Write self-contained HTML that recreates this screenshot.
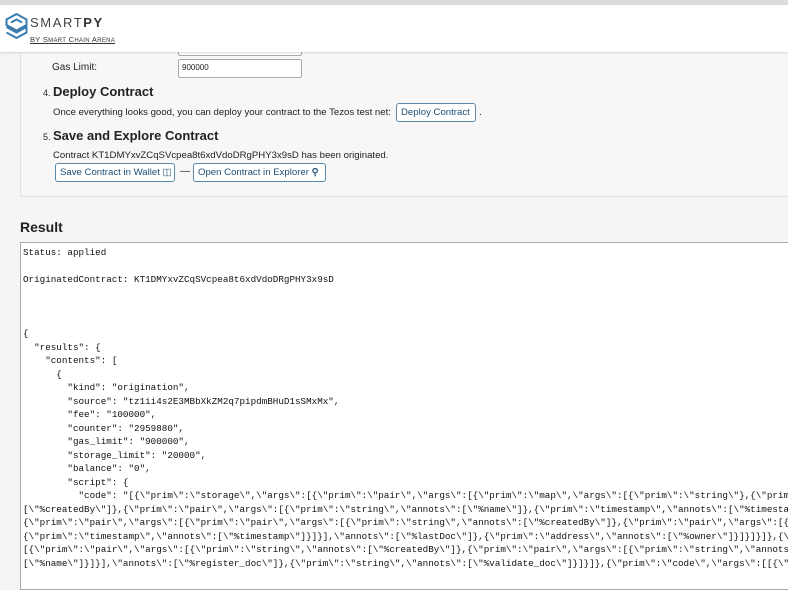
<!DOCTYPE html>
<html><head><meta charset="utf-8"><style>
body{margin:0;width:788px;height:573px;overflow:hidden;background:#f5f5f5;font-family:"Liberation Sans",sans-serif;color:#222;position:relative}
.top{position:absolute;left:0;top:0;width:788px;height:5px;background:#dcdcdc}
.hdr{position:absolute;left:0;top:5px;width:788px;height:47px;background:#fff;box-shadow:0 1px 2px rgba(0,0,0,.15);z-index:2}
.card{position:absolute;left:20px;top:40px;width:780px;height:155px;background:#f7f7f7;border:1px solid #e2e2e2}
.a{position:absolute;white-space:nowrap}
.inp{position:absolute;background:#fff;border:1px solid #aaa;border-radius:2px;font-size:8px;padding-left:3px;box-sizing:border-box;line-height:16px}
.btn{position:absolute;white-space:nowrap;border:1px solid #5a88a8;border-radius:3px;background:#fff;color:#1d4f76;font-size:10px;line-height:17px;padding:0 4px;box-sizing:border-box}
h3{margin:0;font-size:13px;font-weight:bold}
pre{position:absolute;left:20px;top:242px;width:800px;height:340px;margin:0;background:#fff;border:1px solid #aaa;font-family:"Liberation Mono",monospace;font-size:9.25px;line-height:13.5px;padding:3px 2px;overflow:hidden;color:#111}
</style></head><body>
<div class="top"></div>
<div class="hdr">
<svg style="position:absolute;left:5px;top:8px" width="23" height="26" viewBox="0 0 23 26" fill="none" stroke="#3a7cb0" stroke-width="2"><path d="M11.5 1L21.5 6.5V12L11.5 17.5L1.5 12V6.5Z"/><path d="M6 9.5L11.5 6.5L17 9.5"/><path d="M1.5 14L11.5 19.5L21.5 14V19.5L11.5 25L1.5 19.5"/></svg>
<div class="a" style="left:30px;top:10px;font-size:13px;letter-spacing:1.6px;color:#444">SMART<b style="color:#333">PY</b></div>
<div class="a" style="left:30px;top:30px;font-size:7.5px;letter-spacing:.3px;color:#333;text-decoration:underline">BY S<span style="font-size:6px">MART</span> C<span style="font-size:6px">HAIN</span> A<span style="font-size:6px">RENA</span></div>
</div>
<div class="card"></div>
<div class="inp" style="left:178px;top:46px;width:124px;height:10px"></div>
<div class="a" style="left:52px;top:62px;font-size:10px">Gas Limit:</div>
<div class="inp" style="left:178px;top:59px;width:124px;height:19px">900000</div>
<div class="a" style="left:43px;top:88px;font-size:9px">4.</div><h3 class="a" style="left:53px;top:84px">Deploy Contract</h3>
<div class="a" style="left:53px;top:107px;font-size:9.6px">Once everything looks good, you can deploy your contract to the Tezos test net:</div>
<div class="btn" style="left:396px;top:103px;height:19px;width:80px;font-size:9.6px">Deploy Contract</div>
<div class="a" style="left:479px;top:107px;font-size:10px">.</div>
<div class="a" style="left:43px;top:132px;font-size:9px">5.</div><h3 class="a" style="left:53px;top:128px">Save and Explore Contract</h3>
<div class="a" style="left:53px;top:150px;font-size:9.6px">Contract KT1DMYxvZCqSVcpea8t6xdVdoDRgPHY3x9sD has been originated.</div>
<div class="btn" style="left:55px;top:163px;height:19px;width:120px;font-size:9.6px">Save Contract in Wallet &#9707;</div>
<div class="a" style="left:180px;top:166px;font-size:10px">—</div>
<div class="btn" style="left:193px;top:163px;height:19px;width:133px;font-size:9.6px">Open Contract in Explorer <b>&#9906;</b></div>
<div class="a" style="left:20px;top:219px;font-size:14px;font-weight:bold;color:#222">Result</div>
<pre>Status: applied

OriginatedContract: KT1DMYxvZCqSVcpea8t6xdVdoDRgPHY3x9sD



{
  "results": {
    "contents": [
      {
        "kind": "origination",
        "source": "tz1ii4s2E3MBbXkZM2q7pipdmBHuD1sSMxMx",
        "fee": "100000",
        "counter": "2959880",
        "gas_limit": "900000",
        "storage_limit": "20000",
        "balance": "0",
        "script": {
          "code": "[{\"prim\":\"storage\",\"args\":[{\"prim\":\"pair\",\"args\":[{\"prim\":\"map\",\"args\":[{\"prim\":\"string\"},{\"prim
[\"%createdBy\"]},{\"prim\":\"pair\",\"args\":[{\"prim\":\"string\",\"annots\":[\"%name\"]},{\"prim\":\"timestamp\",\"annots\":[\"%timesta
{\"prim\":\"pair\",\"args\":[{\"prim\":\"pair\",\"args\":[{\"prim\":\"string\",\"annots\":[\"%createdBy\"]},{\"prim\":\"pair\",\"args\":[{
{\"prim\":\"timestamp\",\"annots\":[\"%timestamp\"]}]}],\"annots\":[\"%lastDoc\"]},{\"prim\":\"address\",\"annots\":[\"%owner\"]}]}]}]},{\
[{\"prim\":\"pair\",\"args\":[{\"prim\":\"string\",\"annots\":[\"%createdBy\"]},{\"prim\":\"pair\",\"args\":[{\"prim\":\"string\",\"annots
[\"%name\"]}]}],\"annots\":[\"%register_doc\"]},{\"prim\":\"string\",\"annots\":[\"%validate_doc\"]}]}]},{\"prim\":\"code\",\"args\":[[{\"</pre>
</body></html>
